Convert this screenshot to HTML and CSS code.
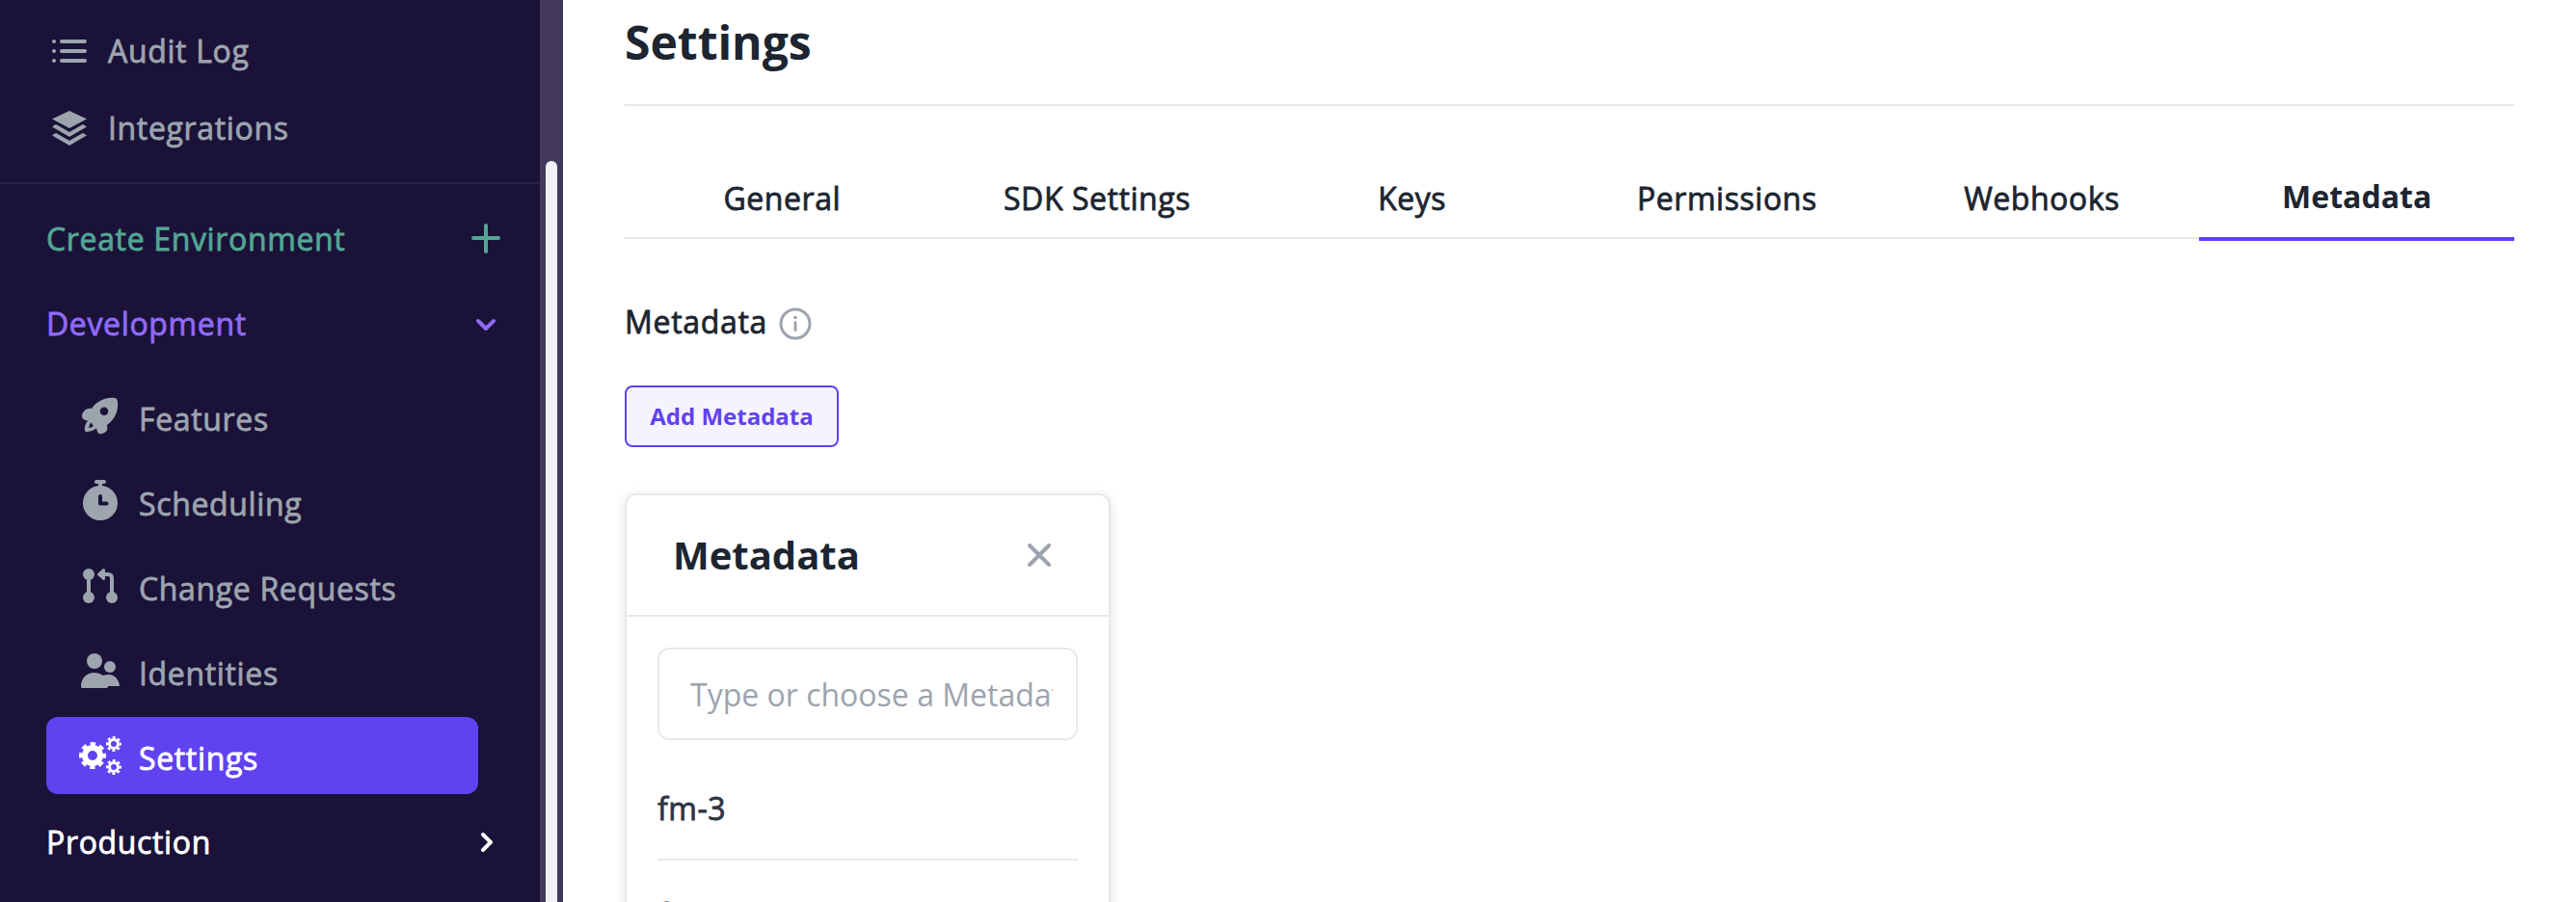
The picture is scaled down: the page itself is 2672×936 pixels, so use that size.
FILE: index.html
```html
<!DOCTYPE html>
<html lang="en">
<head>
<meta charset="utf-8">
<title>Settings</title>
<link rel="stylesheet" href="styles.css">
</head>
<body>
<aside class="sidebar">
  <nav class="nav">
    <a class="top-link"><svg class="icon" viewBox="0 0 36 36" fill="none" stroke="currentColor" stroke-width="4" stroke-linecap="round"><path d="M10 8H34M10 18H34M10 28H34M2 8h.01M2 18h.01M2 28h.01"/></svg><span class="medium">Audit Log</span></a>
    <a class="top-link"><svg class="icon" viewBox="0 0 36 36" fill="currentColor"><path d="M18 0 36 8.500 18 18 0 8.500zM0 16.500 4 14 18 22 32 14 36 16.500 18 27zM0 25.500 4 23 18 31 32 23 36 25.500 18 36z"/></svg><span class="medium">Integrations</span></a>
    <hr class="rule">
    <a class="env create"><span class="medium">Create Environment</span><svg class="env-icon" viewBox="0 0 32 32" fill="none" stroke="currentColor" stroke-width="4" stroke-linecap="round"><path d="M16 2V29M3 15H29"/></svg></a>
    <a class="env current"><span class="medium">Development</span><svg class="env-icon" viewBox="0 0 32 32" fill="none" stroke="currentColor" stroke-width="4" stroke-linecap="round" stroke-linejoin="round"><path d="M8 13 16 21 24 13"/></svg></a>
    <div class="group">
      <a class="item"><svg class="item-icon" viewBox="0 0 44 44" fill="currentColor" fill-rule="evenodd"><path d="M37 3C27 2 19 6 13 14C7 13 3 18 3 22Q3 25 7 26L9 26.500C6 31 5.500 34 6 37Q6.200 38.500 9 38Q14 37.500 18 34.500L19 38Q20 41 24 40Q31 38 29 31C37 25 41 17 40 7Q39.500 3.200 37 3zM26 12.500a4.300 4.300 0 1 1 0 8.600a4.300 4.300 0 1 1 0-8.600zM12.500 28.500L15 32Q13 34 10 34Q10.200 31 12.500 28.500z"/></svg><span class="medium">Features</span></a>
      <a class="item"><svg class="item-icon" viewBox="0 0 44 44" fill="none"><circle cx="22" cy="24" r="18" fill="currentColor"/><path d="M22 2V8M18 2H26" stroke="currentColor" stroke-width="4" stroke-linecap="round"/><path class="cut" d="M22 17V24.500H28.500"/></svg><span class="medium">Scheduling</span></a>
      <a class="item"><svg class="item-icon" viewBox="0 0 44 44" fill="none" stroke="currentColor" stroke-width="4" stroke-linecap="round" stroke-linejoin="round"><path d="M10 10V34M34 34V14Q34 10 30 10H22"/><path d="M20.500 10 25.500 5.500V14.500z" stroke-width="3" fill="currentColor"/><g fill="currentColor" stroke="none"><circle cx="10" cy="10" r="6"/><circle cx="10" cy="34" r="6"/><circle cx="34" cy="34" r="6"/></g></svg><span class="medium">Change Requests</span></a>
      <a class="item"><svg class="item-icon" viewBox="0 0 44 44" fill="currentColor"><circle cx="16" cy="12" r="8"/><circle cx="32" cy="18" r="6"/><path d="M2 38C2 30 8 24 16 24Q21 24 25 27Q34 24 39 30Q42 34 42 38H30V39Q29 40 28 40H3Q2 40 2 38z"/></svg><span class="medium">Identities</span></a>
      <a class="item active"><svg class="item-icon" viewBox="0 0 44 44" fill="none" stroke="currentColor"><g><circle cx="14" cy="22" r="8" stroke-width="6"/><circle cx="14" cy="22" r="12" stroke-width="4" stroke-dasharray="5.300 4.125" stroke-dashoffset="2.650"/></g><g><circle cx="36" cy="10" r="4.500" stroke-width="3"/><circle cx="36" cy="10" r="6.800" stroke-width="2.400" stroke-dasharray="3 2.340" stroke-dashoffset="1.500"/></g><g><circle cx="36" cy="34" r="4.500" stroke-width="3"/><circle cx="36" cy="34" r="6.800" stroke-width="2.400" stroke-dasharray="3 2.340" stroke-dashoffset="1.500"/></g></svg><span class="medium">Settings</span></a>
    </div>
    <a class="env prod"><span class="medium">Production</span><svg class="env-icon" viewBox="0 0 32 32" fill="none" stroke="currentColor" stroke-width="4" stroke-linecap="round" stroke-linejoin="round"><path d="M13 8 21 16 13 24"/></svg></a>
  </nav>
  <div class="track"><div class="thumb"></div></div>
</aside>
<main class="main">
  <h1 class="title">Settings</h1>
  <div class="tabs">
    <a class="tab medium">General</a><a class="tab medium">SDK Settings</a><a class="tab medium">Keys</a><a class="tab medium">Permissions</a><a class="tab medium">Webhooks</a><a class="tab selected">Metadata</a>
  </div>
  <div class="label"><span class="medium">Metadata</span><svg class="info" viewBox="0 0 34 34" fill="none" stroke="currentColor" stroke-width="3"><circle cx="17" cy="17" r="15"/><path d="M17 15.500V23.500" stroke-linecap="round"/><circle cx="17" cy="10.500" r="1.800" fill="currentColor" stroke="none"/></svg></div>
  <button class="add">Add Metadata</button>
  <section class="card">
    <header class="card-head"><h2 class="card-title">Metadata</h2><svg class="close" viewBox="0 0 24 24" fill="none" stroke="currentColor" stroke-width="4" stroke-linecap="round"><path d="M2 2 22 22M22 2 2 22"/></svg></header>
    <div class="card-body">
      <div class="field"><span class="placeholder">Type or choose a Metadata</span></div>
      <div class="option medium">fm-3</div>
      <div class="option medium">fm-2</div>
    </div>
  </section>
</main>
</body>
</html>
```
FILE: styles.css
```css
* { box-sizing: border-box; }
html { height: 936px; overflow: hidden; }
body {
  margin: 0;
  height: 936px;
  display: flex;
  overflow: hidden;
  background: #fff;
  color: #1c2530;
  font: 400 32px/44px "Open Sans", "Noto Sans", sans-serif;
}
/* Medium weight, between the regular and bold faces */
.medium { letter-spacing: .55px; -webkit-text-stroke: .8px currentColor; }
.sidebar { width: 584px; height: 936px; flex: none; display: flex; background: #1a1238; color: #9da4ae; }
.sidebar .medium { letter-spacing: .65px; }
.nav { width: 560px; overflow: hidden; }
.track { width: 24px; height: 936px; padding: 167px 6px 0; background: #41385c; }
.thumb { height: 769px; border-radius: 6px 6px 0 0; background: #eff1f4; }
.top-link { display: flex; align-items: center; height: 80px; padding-left: 54px; gap: 22px; }
.top-link:first-child { margin-top: 13px; }
.icon { width: 36px; height: 36px; }
.rule { height: 2px; margin: 16px 0 0; border: 0; background: #2a2245; }
.env { display: flex; align-items: center; justify-content: space-between; height: 88px; padding: 0 40px 0 48px; }
.env-icon { width: 32px; height: 32px; }
.create { margin-top: 13px; color: #53a693; }
.current { color: #906af6; }
.group { padding: 12px 64px 0 48px; }
.item { display: flex; align-items: center; height: 80px; margin-bottom: 8px; padding-left: 34px; gap: 18px; border-radius: 12px; }
.item span { padding-top: 5px; }
.item-icon { width: 44px; height: 44px; overflow: visible; }
.cut { stroke: #1a1238; stroke-width: 4; stroke-linecap: round; stroke-linejoin: round; }
.active { background: #6042f1; color: #fff; }
.prod { height: 84px; color: #fff; }
.main { width: 2024px; height: 936px; padding: 12px 0 0 64px; overflow: hidden; }
.title { margin: 0; height: 98px; border-bottom: 2px solid #e8e8e8; font-size: 48px; line-height: 64px; font-weight: 700; }
.tabs { display: grid; grid-template-columns: repeat(6, 1fr); height: 140px; padding-top: 66px; }
.tab { height: 72px; padding-top: 8px; border-bottom: 2px solid #e8e8e8; text-align: center; }
.selected { height: 74px; padding-top: 6px; border-bottom: 4px solid #6042f1; font-weight: 700; }
.label { display: flex; align-items: center; height: 44px; margin-top: 62px; gap: 12px; }
.label .medium { letter-spacing: .7px; }
.info { width: 34px; height: 34px; margin-top: 3px; color: #9da4ae; }
.add { display: block; width: 222px; height: 64px; margin-top: 44px; padding: 0; border: 2px solid #6042f1; border-radius: 8px; background: #f5f3fe; color: #6042f1; font: 700 24px/32px "Open Sans", sans-serif; }
.card { width: 504px; height: 440px; margin-top: 48px; border: 2px solid #e8e8e8; border-bottom: 0; border-radius: 12px 12px 0 0; box-shadow: 0 2px 12px rgba(0, 0, 0, .12); }
.card-head { display: flex; align-items: center; justify-content: space-between; height: 126px; padding: 0 60px 0 48px; border-bottom: 2px solid #e8e9ea; }
.card-title { margin: 0; font-size: 40px; font-weight: 700; }
.close { width: 24px; height: 24px; color: #9da4ae; }
.card-body { height: 314px; padding: 32px 32px 0; overflow: hidden; }
.field { display: flex; align-items: center; height: 96px; margin-bottom: 28px; padding: 2px 24px 0 32px; border: 2px solid #e8eaea; border-radius: 12px; color: #9da4ae; }
.placeholder { overflow: hidden; white-space: nowrap; }
.option { height: 97px; margin-bottom: 13px; padding-top: 21px; border-bottom: 2px solid #e8e8e8; color: #2d3443; }
```
